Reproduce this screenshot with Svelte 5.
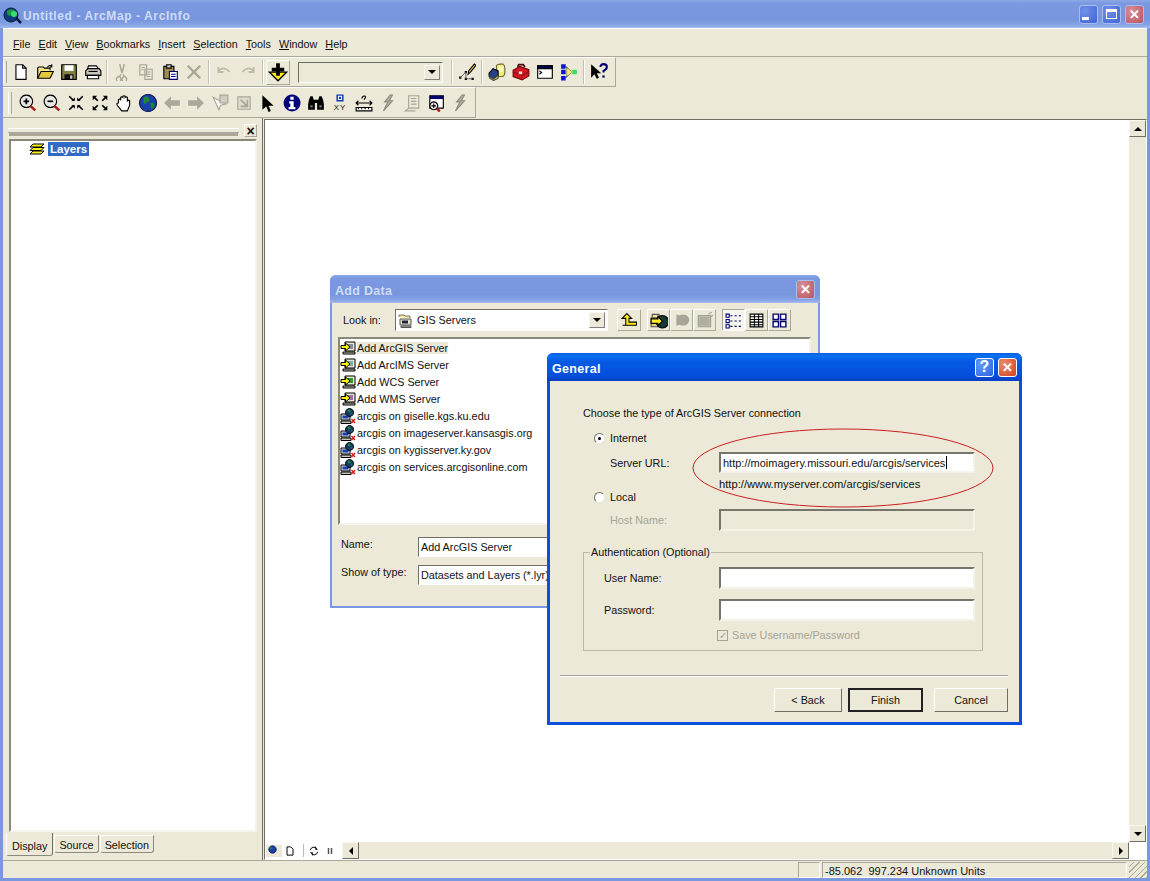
<script>
  // each icon is a list of [d, fill, stroke, strokeWidth] drawn on a 16x16 grid
  const G = '#a7a596'
  const bolt = [['M10 1 5 7h3L4 15l8-9H9l3-5z', '#b5b3a4', '#8c8a7c']]
  const addServer = (screen) => [
    ['M5 2h10v9H5z', '#e8e8d8', '#000'],
    ['M7 4h6v5H7z', screen, 'none'],
    ['M3 12h12v2H3z', '#c8c6b0', '#000'],
    ['M1 5.500h4.500V3l4.500 4-4.500 4V8.500H1z', '#ffef1a', '#000']
  ]
  const icons = {
    new: [['M3.500 1.500h6l3 3v10h-9z', '#fff', '#000'], ['M9.500 1.500v3h3', 'none', '#000']],
    open: [['M1.500 13.500v-9l1-1h4l1 1h5v2', '#f3e28a', '#000'], ['M1.500 13.500l3-6h11l-3 6z', '#e4c83c', '#000'], ['M10 4q2-3 4-1M14 1v2.500h-2', 'none', '#000']],
    save: [['M1.500 1.500h13v13h-13z', '#808040', '#000'], ['M4 2h8v5H4z', '#fff', 'none'], ['M4 10h8v4.500H4z', '#111', 'none'], ['M9 11h2v3H9z', '#ccc', 'none']],
    print: [['M4 2.500h7l2 3H3z', '#fff', '#000'], ['M1.500 7l2-2h10l1.500 2v4H1.500z', '#c8c6ba', '#000'], ['M3 11h10v3H3z', '#fff', '#000'], ['M4 7.500h8', 'none', '#000']],
    cut: [['M6 1l2 8M10 1 8 9', 'none', G, 1.300], ['M5 12a2 2.500 0 1 0 .1 0zM10 12a2 2.500 0 1 0 .1 0zM7 10l-1 2M9 10l1 2', 'none', G, 1.200]],
    copy: [['M2.500 1.500h6v9h-6zM7 5.500h6.500v9H7z', '#ece9d8', G], ['M4 4h3M4 6h2M8.500 8h3.500M8.500 10h3.500M8.500 12h3.500', 'none', G]],
    paste: [['M2.500 3h9v11h-9z', '#a08c50', '#000'], ['M5 1.500h4v3H5z', '#ccc', '#000'], ['M7.500 7.500h7v7h-7z', '#fff', '#00007a'], ['M9 10h4M9 12h4', 'none', '#00007a']],
    del: [['M2.500 2.500l11 11M13.500 2.500l-11 11', 'none', G, 2]],
    undo: [['M3 7q5-5 10 1M3 3.500V8h4.500', 'none', '#bdbbac', 1.600]],
    redo: [['M13 7q-5-5-10 1M13 3.500V8H8.500', 'none', '#bdbbac', 1.600]],
    add: [['M1 8h14L8 15z', '#ffef1a', '#000'], ['M6.500 1h3v3.500H13v3H9.500V11h-3V7.500H3v-3h3.500z', '#000', 'none']],
    edit: [['M1 12h2v2H1zM6 7h2v2H6zM6 13h2v2H6zM12 13h2v2h-2z', '#000', 'none'], ['M2 13l5-5M7 8v6M7 14h6', 'none', '#555', 0.800], ['M9 10l.500-3 5-6 1.500 1.200-5 6z', '#ffe04a', '#000']],
    catalog: [['M7.500 2.500q1-1.500 3-1.500h3q1.500 1 1.500 4v3q0 3-2 4H8z', '#f2ee7c', '#6a6a30'], ['M9 3h4q1 2 0 5H9z', '#fafac0', 'none'], ['M1 9l3.500-4L9 7v4l-4 3-4-2z', '#26408c', '#000'], ['M1.500 12l3.500 2 4-3v2.500l-4 2-3.500-2z', '#e8e05c', '#444']],
    toolbox: [['M1 6.500l6-3.500 8 3v5.500l-6 3.500-8-3z', '#d8141e', '#70080c'], ['M5 3.500l1-2h4l1.500 2', 'none', '#4a0a0a', 1.500], ['M1 8l8 3 6-3.500', 'none', '#8a0c12'], ['M6 7.500h3v2.500H6z', '#f4d8d8', 'none']],
    cmd: [['M1.500 2.500h13v11h-13z', '#fff', '#000'], ['M1.500 2.500h13v2.500h-13z', '#00006e', '#000'], ['M3 7l2 1.500L3 10', 'none', '#000']],
    model: [['M1 1h4v4H1zM1 6h4v4H1zM1 11.500h4v4H1z', '#1010d8', 'none'], ['M5 3l2 2v6l-2 2', 'none', '#1010d8'], ['M6 4l5 4-5 4z', '#f6ee80', '#8a8a30', 0.700], ['M11 6h4v4h-4z', '#3cdc60', 'none']],
    help: [['M1 1v12l3-3 2 4 2-1-2-4h4z', '#000', 'none'], ['M9 3.500q1-2.500 3-2.500 3 0 3 2.500 0 2-3 3.500v1.500', 'none', '#00006e', 1.800], ['M11 11h2v2h-2z', '#00006e', 'none']],
    zoomin: [['M6.500 1a5.500 5.500 0 1 0 .1 0z', '#e8e8e4', '#000'], ['M4 6.500h5M6.500 4v5', 'none', '#000', 1.500], ['M10 10.500l4.500 4', 'none', '#b01818', 2.200]],
    zoomout: [['M6.500 1a5.500 5.500 0 1 0 .1 0z', '#e8e8e4', '#000'], ['M4 6.500h5', 'none', '#000', 1.500], ['M10 10.500l4.500 4', 'none', '#b01818', 2.200]],
    fixin: [['M2 2l4 4M14 2l-4 4M2 14l4-4M14 14l-4-4', 'none', '#000', 1.500], ['M4 6h3V3zM12 6H9V3zM4 10h3v3zM12 10H9v3z', '#000', 'none']],
    fixout: [['M6 6L3 3M10 6l3-3M6 10l-3 3M10 10l3 3', 'none', '#000', 1.500], ['M1.500 1.500h4l-4 4zM14.500 1.500h-4l4 4zM1.500 14.500h4l-4-4zM14.500 14.500h-4l4-4z', '#000', 'none']],
    pan: [['M3 8V5q1-1 2 0V3q1-1 2 0v-1q1-1 2 0v1q1-1 2 0v3q1-1 2 0v4l-2 5H6L2 10q-1-2 1-2z', '#fff', '#000']],
    globe: [['M8 .5a7.500 7.500 0 1 0 .1 0z', '#1a3fa8', '#0a1a50'], ['M4 3q4-2 5 1 1 3-2 3-1 3-3 1zM10 8q4-1 4 2-2 4-3 3z', '#1d8a32', 'none']],
    back: [['M1 8l6-6v3.500h8v5H7V14z', '#aaa89a', 'none']],
    fwd: [['M15 8 9 2v3.500H1v5h8V14z', '#aaa89a', 'none']],
    sel: [['M2 3l5 11 1.500-4L13 9z', '#fff', G], ['M8 1h7v7H8z', '#d0cec0', G]],
    clear: [['M2.500 2.500h11v11h-11z', '#e0ddcc', G], ['M5 5l6 6M11 5v6H5', 'none', G, 1.400]],
    pointer: [['M3 1v13l3.500-3 2 5 2-1-2-4.500H13z', '#000', 'none']],
    info: [['M8 .5a7.500 7.500 0 1 0 .1 0z', '#00007a', 'none'], ['M6.500 2.500h3v2.500h-3zM5.500 6.500h4v5h1.500v2H5v-2h1.500v-3h-1z', '#fff', 'none']],
    find: [['M1 9q0-3 2-7h2l1 3h4l1-3h2q2 4 2 7v5H9V8H7v6H1z', '#000', 'none'], ['M3 10h2v2H3zM11 10h2v2h-2z', '#777', 'none']],
    xy: [['M5.500 1h5v5h-5z', '#fff', '#0c3ab0', 1.300], ['M7.500 3h1v1h-1z', '#0c3ab0', '#0c3ab0']],
    measure: [['M1 12h14v3H1z', '#fff', '#000'], ['M3 12v1.500M6 12v1.500M9 12v1.500M12 12v1.500', 'none', '#000'], ['M1 8h14M3 6l-2 2 2 2M13 6l2 2-2 2', 'none', '#000'], ['M6 4q1-3 3-2 1 1-1 3', 'none', '#000']],
    bolt,
    text: [['M5 1.500h9v11H5z', '#ece9d8', G], ['M7 4h5M7 6.500h5M7 9h5M5 12.500l-3 2.500h9', 'none', G]],
    viewer: [['M2.500 1.500h12v11h-12z', '#fff', '#000'], ['M2.500 1.500h12v3h-12z', '#00006e', 'none'], ['M6 7a3.500 3.500 0 1 0 .1 0z', '#eee', '#000'], ['M4 10.500h4M6 8.500v4', 'none', '#000'], ['M8.500 13l3 2.500', 'none', '#b01818', 2]],
    addgis: addServer('#8888a0'),
    addims: addServer('#7ab0a0'),
    addwcs: addServer('#2c9a30'),
    addwms: addServer('#9a70a0'),
    gissrv: [['M1 6h9v6H1z', '#d8d8e8', '#000'], ['M2.500 7.500h6v3h-6z', '#1a3fa8', 'none'], ['M1 13h10v2.500H1z', '#c8c6b8', '#000'], ['M9.500 .5a4 4 0 1 0 .1 0z', '#143a70', '#000'], ['M7.500 2q2-1 3 .5t-2 2zM12 4l.500 2-2 1z', '#1d8a32', 'none'], ['M11.500 11l3.500 4M15 11l-3.500 4', 'none', '#d01818', 1.300]],
    gisfolder: [['M1 5V3h5l1 1h5v2', '#f3e28a', '#777'], ['M2 7h11v6H2z', '#e8e4c8', '#555'], ['M4 8.500h6v3H4z', '#224', 'none'], ['M3 14h10v1.500H3z', '#aaa', '#555']],
    up: [['M1.500 12.500h13v-3h-7V6H10L5.500 1.500 1 6h3.500v6.500', '#ffef1a', '#000']],
    connect: [['M2 6V3h6v4', '#f3e28a', '#555'], ['M1 6h8v8H1z', '#e8d070', '#555'], ['M11 4a5.500 5.500 0 1 0 .1 0z', '#143a30', '#000'], ['M1 7h6V5l4 4-4 4v-2H1z', '#ffef1a', '#000']],
    db: [['M3 3a5 5 0 1 1 0 10zM9 3a5.500 5 0 1 1-.1 0z', '#a8a698', 'none'], ['M4 5h9v6H4z', '#a8a698', 'none']],
    tv: [['M2 4h11v10H2z', '#c8c6b6', '#a09e90'], ['M3 5h9v8H3z', '#b0ae9e', 'none'], ['M11 3l3-2M13 5l2-1', 'none', '#a09e90']],
    details: [['M1 2h3v3H1zM1 7h3v3H1zM1 12h3v3H1z', '#fff', '#00007a'], ['M5 3.500h2M5 8.500h2M5 13.500h2M9 3.500h2M9 8.500h2M9 13.500h2M13 3.500h2M13 8.500h2M13 13.500h2', 'none', '#00007a']],
    grid: [['M2 2h12v12H2z', '#fff', '#000'], ['M2 4.500h12M2 7h12M2 9.500h12M2 12h12M6 2v12M10 2v12', 'none', '#000']],
    large: [['M2 2h5v5H2zM9 2h5v5H9zM2 9h5v5H2zM9 9h5v5H9z', '#fff', '#00006e', 1.300]],
    mapview: [['M6 1a5 5 0 1 0 .1 0z', '#1a3fa8', '#0a1a50'], ['M3 3q3-1 3 2-2 2-3 0z', '#1d8a32', 'none']],
    page: [['M4 2.500h5l3 3v8H4z', '#fff', '#000', 1.300]],
    refresh: [['M3 7a5 5 0 0 1 9-2M13 9a5 5 0 0 1-9 2', 'none', '#000', 1.300], ['M10 2v4h3M6 14v-4H3', 'none', '#000']],
    pause: [['M5 4h2v8H5zM9 4h2v8H9z', '#555', 'none']]
  }

  const menus = ['File', 'Edit', 'View', 'Bookmarks', 'Insert', 'Selection', 'Tools', 'Window', 'Help']
  const row1a = ['new', 'open', 'save', 'print', ':', 'cut', 'copy', 'paste', 'del', '|', 'undo', 'redo', '|']
  const row1b = ['|', 'edit', '|', 'catalog', 'toolbox', 'cmd', 'model', '|', 'help']
  const row2 = ['zoomin', 'zoomout', 'fixin', 'fixout', 'pan', 'globe', 'back', 'fwd', 'sel', 'clear', 'pointer', 'info', 'find', 'xy', 'measure', 'bolt', 'text', 'viewer', 'bolt']
  const sources = [
    ['addgis', 'Add ArcGIS Server'],
    ['addims', 'Add ArcIMS Server'],
    ['addwcs', 'Add WCS Server'],
    ['addwms', 'Add WMS Server'],
    ['gissrv', 'arcgis on giselle.kgs.ku.edu'],
    ['gissrv', 'arcgis on imageserver.kansasgis.org'],
    ['gissrv', 'arcgis on kygisserver.ky.gov'],
    ['gissrv', 'arcgis on services.arcgisonline.com']
  ]
</script>

{#snippet icon(name, size = 18)}
  <svg class="icon" width={size} height={size} viewBox="0 0 16 16">
    {#each icons[name] as [d, fill, stroke, sw]}
      <path {d} {fill} {stroke} stroke-width={sw ?? 1} />
    {/each}
    {#if name === 'xy'}
      <text x="8" y="14.500" text-anchor="middle" font-size="7" letter-spacing="1" fill="#111">XY</text>
    {/if}
  </svg>
{/snippet}

{#snippet tools(list)}
  {#each list as name}
    {#if name === '|' || name === ':'}
      <span class="sep" class:tight={name === ':'}></span>
    {:else}
      <span class="tool">{@render icon(name)}</span>
    {/if}
  {/each}
{/snippet}

{#snippet arrow(dir)}
  <span class="arrow {dir}"></span>
{/snippet}

<div class="app">
  <header class="title inactive">
    <svg class="logo" width="20" height="20" viewBox="0 0 20 20">
      <circle cx="8" cy="9" r="7" fill="#123a78" stroke="#0a1a40" />
      <path d="M4 5q4-3 7-1 2 3-2 5-3 2-5-1z" fill="#1d9a40" />
      <circle cx="11" cy="8" r="3" fill="#34e070" />
      <path d="M13 12l5 5" stroke="#0a1a40" stroke-width="2.500" />
    </svg>
    <span class="title-text">Untitled - ArcMap - ArcInfo</span>
    <div class="caption-btns">
      <span class="cap"><span class="min"></span></span>
      <span class="cap"><span class="max"></span></span>
      <span class="cap close">✕</span>
    </div>
  </header>

  <div class="chrome">
    <nav class="menubar">
      {#each menus as m}<span class="menu">{m}</span>{/each}
    </nav>

    <div class="toolbar row1">
      <span class="grip"></span>
      {@render tools(row1a)}
      <span class="tool raised">{@render icon('add', 20)}</span>
      <div class="scale">
        <span class="scale-field"></span>
        <span class="scale-btn">{@render arrow('down')}</span>
      </div>
      {@render tools(row1b)}
    </div>

    <div class="toolbar row2">
      <span class="grip"></span>
      {@render tools(row2)}
    </div>

    <main class="workspace">
      <aside class="toc">
        <div class="toc-head">
          <span class="toc-grip"></span>
          <span class="toc-close">×</span>
        </div>
        <div class="tree">
          <div class="tree-row">
            <svg class="icon" width="16" height="14" viewBox="0 0 16 14">
              <path d="M4 2h11l-3 3H1zM4 5.500h11l-3 3H1zM4 9h11l-3 3H1z" fill="#f8f020" stroke="#000" />
            </svg>
            <span class="layer-name">Layers</span>
          </div>
        </div>
        <div class="tabs">
          <span class="tab active">Display</span>
          <span class="tab">Source</span>
          <span class="tab">Selection</span>
        </div>
      </aside>

      <section class="map">
        <div class="map-top">
          <div class="canvas"></div>
          <div class="vscroll">
            <span class="sbtn">{@render arrow('up')}</span>
            <span class="strack"></span>
            <span class="sbtn">{@render arrow('down')}</span>
          </div>
        </div>
        <div class="map-bottom">
          <div class="view-btns">
            <span class="vb on">{@render icon('mapview', 12)}</span>
            <span class="vb">{@render icon('page', 12)}</span>
            <span class="vsep"></span>
            <span class="vb">{@render icon('refresh', 12)}</span>
            <span class="vb">{@render icon('pause', 12)}</span>
          </div>
          <div class="hscroll">
            <span class="sbtn">{@render arrow('left')}</span>
            <span class="strack"></span>
            <span class="sbtn">{@render arrow('right')}</span>
          </div>
          <span class="corner"></span>
        </div>
      </section>
    </main>

    <footer class="status">
      <span class="cell small"></span>
      <span class="cell coords">-85.062  997.234 Unknown Units</span>
      <span class="sizer"></span>
    </footer>
  </div>

  <div class="dialog add-data">
    <header class="title d-title inactive">
      <span class="d-name">Add Data</span>
      <span class="cap close">✕</span>
    </header>
    <div class="d-body">
      <div class="look">
        <span class="look-label">Look in:</span>
        <div class="combo">
          {@render icon('gisfolder', 16)}
          <span class="combo-text">GIS Servers</span>
          <span class="scale-btn">{@render arrow('down')}</span>
        </div>
        <span class="ibtn first">{@render icon('up', 17)}</span>
        <span class="ibtn lead">{@render icon('connect', 18)}</span>
        <span class="ibtn">{@render icon('db', 18)}</span>
        <span class="ibtn">{@render icon('tv', 18)}</span>
        <span class="ibtn lead pressed">{@render icon('details', 17)}</span>
        <span class="ibtn">{@render icon('grid', 17)}</span>
        <span class="ibtn">{@render icon('large', 17)}</span>
      </div>
      <div class="list">
        {#each sources as [ic, label], i}
          <div class="item">
            {@render icon(ic, 16)}
            <span class:current={i === 0}>{label}</span>
          </div>
        {/each}
      </div>
      <div class="d-field name">
        <span>Name:</span>
        <span class="box">Add ArcGIS Server</span>
      </div>
      <div class="d-field type">
        <span>Show of type:</span>
        <span class="box">Datasets and Layers (*.lyr)</span>
      </div>
    </div>
  </div>

  <div class="dialog general">
    <header class="title d-title active-title">
      <span class="d-name">General</span>
      <span class="cap help-cap">?</span>
      <span class="cap close hot">✕</span>
    </header>
    <div class="g-body">
      <p class="intro">Choose the type of ArcGIS Server connection</p>
      <label class="radio-row first-radio"><span class="radio checked"></span>Internet</label>
      <div class="form-row url-row">
        <span class="f-label">Server URL:</span>
        <span class="input">http://moimagery.missouri.edu/arcgis/services<span class="caret"></span></span>
      </div>
      <div class="hint">http://www.myserver.com/arcgis/services</div>
      <label class="radio-row"><span class="radio"></span>Local</label>
      <div class="form-row host-row">
        <span class="f-label disabled">Host Name:</span>
        <span class="input off"></span>
      </div>
      <fieldset class="auth">
        <legend>Authentication (Optional)</legend>
        <div class="form-row user-row">
          <span class="f-label">User Name:</span>
          <span class="input"></span>
        </div>
        <div class="form-row pass-row">
          <span class="f-label">Password:</span>
          <span class="input"></span>
        </div>
        <label class="check disabled"><span class="checkbox">✓</span>Save Username/Password</label>
      </fieldset>
      <div class="rule"></div>
      <div class="buttons">
        <button class="btn back" type="button">&lt; Back</button>
        <button class="btn default" type="button">Finish</button>
        <button class="btn cancel" type="button">Cancel</button>
      </div>
    </div>
  </div>

  <svg class="ring" width="320" height="90" viewBox="0 0 320 90">
    <ellipse cx="160" cy="45" rx="150" ry="39" fill="none" stroke="#cc2020" stroke-width="1" />
  </svg>
</div>

<style>
  :global(body) {
    margin: 0;
    background: #ece9d8;
  }

  .app {
    position: relative;
    width: 1150px;
    height: 881px;
    overflow: hidden;
    display: flex;
    flex-direction: column;
    font-family: "Liberation Sans", Arial, sans-serif;
    font-size: 10.800px;
    color: #111;
    background: #7b97e0;
  }

  .icon {
    display: block;
    flex: none;
  }

  /* title bars */
  .title {
    display: flex;
    align-items: center;
    flex: none;
    font-weight: bold;
  }
  .title.inactive {
    background: linear-gradient(#8aa8e6 0, #7b98e0 12%, #7896de 70%, #87a4e6 90%, #a6bdf0 100%);
    color: #cfdcf8;
  }
  .app > .title {
    height: 28px;
    box-sizing: border-box;
    padding: 3px 6px 0 3px;
  }
  .title-text {
    font-size: 12px;
    letter-spacing: 0.600px;
  }
  .caption-btns {
    margin: -3px 0 0 auto;
    display: flex;
    gap: 4px;
  }
  .cap {
    width: 19px;
    height: 19px;
    box-sizing: border-box;
    border: 1px solid #a8bdf0;
    border-radius: 3px;
    background: radial-gradient(circle at 30% 30%, #6f92e8, #3f63d6);
    color: #fff;
    display: flex;
    align-items: center;
    justify-content: center;
    font-size: 13px;
    font-weight: bold;
    flex: none;
  }
  .cap.close {
    background: radial-gradient(circle at 30% 30%, #d88f98, #b8545e);
  }
  .cap.hot {
    background: radial-gradient(circle at 30% 30%, #ee8d6c, #d0401c);
    border-color: #fff;
  }
  .cap.help-cap {
    background: radial-gradient(circle at 30% 30%, #5f9cf8, #2a62e0);
    border-color: #fff;
    font-size: 16px;
  }
  .min {
    width: 7px;
    height: 3px;
    background: #fff;
    margin: 8px 6px 0 0;
  }
  .max {
    width: 11px;
    height: 10px;
    box-sizing: border-box;
    border: 1px solid #fff;
    border-top-width: 3px;
  }

  /* main frame */
  .chrome {
    flex: 1;
    min-height: 0;
    display: flex;
    flex-direction: column;
    margin: 0 3px 3px;
    background: #ece9d8;
  }
  .menubar {
    height: 29px;
    flex: none;
    box-sizing: border-box;
    display: flex;
    align-items: center;
    gap: 8px;
    padding: 2px 0 0 10px;
    border-top: 1px solid #fff;
    border-bottom: 1px solid #aca899;
  }
  .menu {
    display: inline-block;
  }
  .menu::first-letter {
    text-decoration: underline;
  }

  .toolbar {
    display: flex;
    align-items: center;
    flex: none;
    box-sizing: border-box;
    border-top: 1px solid #fff;
    border-right: 1px solid #aca899;
    border-bottom: 1px solid #aca899;
  }
  .row1 {
    height: 30px;
    width: 613px;
  }
  .row2 {
    height: 31px;
    width: 473px;
    padding-left: 5px;
  }
  .grip {
    width: 2px;
    height: 22px;
    border-left: 1px solid #fff;
    border-right: 1px solid #aca899;
    flex: none;
  }
  .row1 .grip {
    margin-right: 2px;
  }
  .row2 .grip {
    margin-right: 4px;
  }
  .sep {
    width: 1px;
    height: 24px;
    background: #c4c1b0;
    border-right: 1px solid #fff;
    flex: none;
    margin: 0 2px;
  }
  .sep.tight {
    margin: 0 2px 0 1px;
  }
  .tool {
    width: 24px;
    height: 24px;
    display: flex;
    align-items: center;
    justify-content: center;
    flex: none;
  }
  .tool.raised {
    height: 25px;
    box-sizing: border-box;
    border: 1px solid;
    border-color: #fff #aca899 #aca899 #fff;
  }
  .scale {
    display: flex;
    box-sizing: border-box;
    width: 145px;
    height: 21px;
    margin: 0 6px 0 8px;
    flex: none;
    padding: 2px;
    border: 1px solid;
    border-color: #716f64 #fff #fff #716f64;
    justify-content: flex-end;
  }
  .scale-field {
    flex: 1;
  }
  .scale-btn {
    width: 16px;
    box-sizing: border-box;
    border: 1px solid;
    border-color: #f8f8f0 #808080 #808080 #f8f8f0;
    background: #ece9d8;
    display: flex;
    align-items: center;
    justify-content: center;
    flex: none;
  }
  .arrow {
    width: 0;
    height: 0;
    border: 4px solid transparent;
  }
  .arrow.down {
    border-top-color: #000;
    border-bottom-width: 0;
  }
  .arrow.up {
    border-bottom-color: #000;
    border-top-width: 0;
  }
  .arrow.left {
    border-right-color: #000;
    border-left-width: 0;
  }
  .arrow.right {
    border-left-color: #000;
    border-right-width: 0;
  }

  /* workspace */
  .workspace {
    flex: 1;
    min-height: 0;
    display: flex;
    border-bottom: 1px solid #aca899;
  }
  .toc {
    width: 260px;
    flex: none;
    display: flex;
    flex-direction: column;
    box-sizing: border-box;
    padding: 4px 5px 3px 3px;
    border-right: 1px solid #716f64;
  }
  .toc-head {
    height: 17px;
    display: flex;
    align-items: center;
    gap: 2px;
    flex: none;
    padding-left: 2px;
  }
  .toc-grip {
    flex: 1;
    height: 3px;
    border-top: 1px solid #fff;
    border-bottom: 1px solid #aca899;
    box-shadow: 0 4px 0 -1px #aca899;
  }
  .toc-close {
    width: 13px;
    height: 13px;
    font-size: 14px;
    font-weight: bold;
    line-height: 12px;
    text-align: center;
    border: 1px solid;
    border-color: #fff #aca899 #aca899 #fff;
    box-sizing: border-box;
    margin-left: 3px;
  }
  .tree {
    flex: 1;
    min-height: 0;
    background: #fff;
    border: 2px solid;
    border-color: #8a8878 #f5f4ec #f5f4ec #8a8878;
    box-sizing: border-box;
    padding: 0 0 0 18px;
    margin-left: 3px;
  }
  .tree-row {
    display: flex;
    align-items: center;
    gap: 3px;
    height: 15px;
  }
  .layer-name {
    background: #316ac5;
    color: #fff;
    font-weight: bold;
    padding: 0 2px;
    line-height: 14px;
    font-size: 11.500px;
  }
  .tabs {
    display: flex;
    align-items: flex-start;
    height: 25px;
    box-sizing: border-box;
    flex: none;
    padding: 3px 0 0;
    gap: 1px;
  }
  .tab {
    box-sizing: border-box;
    padding: 3px 4px 0;
    height: 18px;
    border: 1px solid #8c8a7c;
    border-top-color: #fff;
    border-left-color: #fff;
    border-radius: 0 0 3px 3px;
  }
  .tab.active {
    height: 23px;
    margin-top: -2px;
    padding: 7px 5px 0;
    border-top: 0;
    border-right: 1px solid #716f64;
  }

  .map {
    flex: 1;
    min-width: 0;
    display: flex;
    flex-direction: column;
    border: 1px solid;
    border-color: #716f64 #fff #fff #716f64;
    margin: 1px 0 0 1px;
  }
  .map-top {
    flex: 1;
    min-height: 0;
    display: flex;
  }
  .canvas {
    flex: 1;
    background: #fff;
  }
  .vscroll {
    width: 17px;
    display: flex;
    flex-direction: column;
    flex: none;
  }
  .hscroll {
    flex: 1;
    display: flex;
    height: 17px;
  }
  .sbtn {
    width: 17px;
    height: 17px;
    box-sizing: border-box;
    background: #ece9d8;
    border: 1px solid;
    border-color: #f8f8f0 #716f64 #716f64 #f8f8f0;
    display: flex;
    align-items: center;
    justify-content: center;
    flex: none;
  }
  .strack {
    flex: 1;
    background: #ece9d8;
  }
  .map-bottom {
    display: flex;
    height: 17px;
    flex: none;
    background: #fff;
  }
  .view-btns {
    width: 77px;
    display: flex;
    align-items: center;
    flex: none;
    box-sizing: border-box;
    padding-left: 1px;
    background: #fff;
  }
  .vb {
    width: 16px;
    display: flex;
    justify-content: center;
  }
  .vb.on {
    background: #ece9d8;
  }
  .vsep {
    width: 1px;
    height: 13px;
    background: #bbb;
    margin: 0 2px 0 5px;
  }
  .corner {
    width: 17px;
    background: #fff;
  }

  .status {
    height: 17px;
    flex: none;
    display: flex;
    justify-content: flex-end;
    box-sizing: border-box;
    padding: 1px 0 0;
    gap: 2px;
  }
  .cell {
    border: 1px solid;
    border-color: #aca899 #fff #fff #aca899;
    box-sizing: border-box;
    white-space: pre;
    line-height: 16px;
    padding-left: 2px;
    font-size: 11px;
  }
  .cell.small {
    width: 22px;
  }
  .cell.coords {
    width: 305px;
  }
  .sizer {
    width: 18px;
    background: repeating-linear-gradient(135deg, #ece9d8 0 3px, #aca899 3px 4px);
  }

  /* dialogs float over the map, like windows on a desktop */
  .dialog {
    position: absolute;
    display: flex;
    flex-direction: column;
    box-sizing: border-box;
    border-radius: 6px 6px 0 0;
  }
  .d-title {
    height: 28px;
    box-sizing: border-box;
    padding: 0 5px;
    border-radius: 6px 6px 0 0;
    font-size: 12.500px;
    justify-content: flex-end;
    gap: 4px;
  }
  .d-name {
    margin-right: auto;
    padding-top: 3px;
    letter-spacing: 0.300px;
  }
  .d-title.active-title {
    background: linear-gradient(#0a5ce0 0, #0a72f0 10%, #045ae4 30%, #0450dc 80%, #0a3ec0 100%);
    color: #fff;
  }

  .add-data {
    left: 330px;
    top: 275px;
    width: 490px;
    height: 333px;
    background: #7b97e0;
  }
  .d-body {
    flex: 1;
    margin: 0 2px 2px;
    background: #ece9d8;
    display: flex;
    flex-direction: column;
    padding: 6px 7px 0 6px;
  }
  .look {
    display: flex;
    align-items: center;
    height: 22px;
    margin-left: 1px;
  }
  .look-label {
    width: 56px;
    padding-left: 4px;
    box-sizing: border-box;
    flex: none;
  }
  .combo {
    width: 213px;
    height: 22px;
    box-sizing: border-box;
    display: flex;
    align-items: center;
    gap: 3px;
    background: #fff;
    padding: 2px;
    border: 1px solid;
    border-color: #716f64 #fff #fff #716f64;
    flex: none;
  }
  .combo-text {
    flex: 1;
  }
  .combo .scale-btn {
    height: 16px;
  }
  .ibtn {
    width: 23px;
    height: 22px;
    box-sizing: border-box;
    display: flex;
    align-items: center;
    justify-content: center;
    border: 1px solid;
    border-color: #fff #aca899 #aca899 #fff;
    flex: none;
  }
  .ibtn.first {
    margin-left: 9px;
    width: 24px;
  }
  .ibtn.lead {
    margin-left: 6px;
  }
  .ibtn.pressed {
    background: #f6f5ee;
    border-color: #aca899 #fff #fff #aca899;
  }
  .list {
    height: 188px;
    margin-top: 6px;
    box-sizing: border-box;
    background: #fff;
    border: 2px solid;
    border-color: #8a8878 #f5f4ec #f5f4ec #8a8878;
    flex: none;
  }
  .item {
    height: 17px;
    display: flex;
    align-items: center;
    gap: 1px;
    white-space: nowrap;
    padding-top: 1px;
    box-sizing: border-box;
  }
  .current {
    background: #ece9d8;
  }
  .d-field {
    display: flex;
    align-items: flex-start;
    padding-left: 3px;
  }
  .d-field > span:first-child {
    width: 77px;
    line-height: 14px;
  }
  .d-field.name {
    margin-top: 12px;
  }
  .d-field.type {
    margin-top: 8px;
  }
  .box {
    width: 200px;
    height: 20px;
    line-height: 18px;
    box-sizing: border-box;
    padding-left: 2px;
    background: #fff;
    border: 1px solid;
    border-color: #716f64 #fff #fff #716f64;
    white-space: nowrap;
    overflow: hidden;
  }

  .general {
    left: 547px;
    top: 353px;
    width: 475px;
    height: 372px;
    background: #0a50d8;
  }
  .g-body {
    flex: 1;
    margin: 0 3px 3px;
    background: #ece9d8;
    padding: 0 13px 0 33px;
    box-sizing: border-box;
  }
  .intro {
    margin: 25px 0 0;
    line-height: 14px;
  }
  .radio-row {
    display: flex;
    align-items: center;
    gap: 5px;
    height: 14px;
    padding-left: 11px;
  }
  .first-radio {
    margin-top: 11px;
  }
  .radio-row:not(.first-radio) {
    margin-top: -1px;
  }
  .radio {
    width: 11px;
    height: 11px;
    box-sizing: border-box;
    border-radius: 50%;
    background: #fff;
    border: 1px solid;
    border-color: #716f64 #e8e8e0 #e8e8e0 #716f64;
    position: relative;
    flex: none;
  }
  .radio.checked::after {
    content: "";
    position: absolute;
    left: 3px;
    top: 3px;
    width: 3px;
    height: 3px;
    border-radius: 50%;
    background: #000;
  }
  .form-row {
    display: flex;
    align-items: center;
  }
  .f-label {
    width: 136px;
    flex: none;
    padding-left: 27px;
    box-sizing: border-box;
  }
  .f-label.disabled {
    color: #a6a496;
  }
  .input {
    width: 256px;
    box-sizing: border-box;
    background: #fff;
    border: 2px solid;
    border-color: #77766a #f4f3ea #f4f3ea #77766a;
    white-space: nowrap;
    padding-left: 2px;
    display: flex;
    align-items: center;
    flex: none;
    font-size: 11px;
  }
  .input.off {
    background: #ece9d8;
    height: 22px;
  }
  .caret {
    width: 1px;
    height: 13px;
    background: #000;
    margin-left: 1px;
  }
  .url-row {
    margin-top: 7px;
  }
  .url-row .input {
    height: 21px;
  }
  .hint {
    margin: 4px 0 0 136px;
    line-height: 14px;
    font-size: 11.200px;
  }
  .host-row {
    margin-top: 5px;
  }
  .auth {
    margin: 15px 0 0;
    padding: 0;
    width: 400px;
    height: 105px;
    box-sizing: border-box;
    border: 1px solid #bcb9a8;
  }
  legend {
    margin-left: 6px;
    padding: 0 1px;
    line-height: 12px;
  }
  .auth .f-label {
    width: 135px;
    padding-left: 20px;
  }
  .auth .input {
    height: 22px;
  }
  .user-row {
    margin-top: 9px;
  }
  .pass-row {
    margin-top: 10px;
  }
  .check {
    display: flex;
    align-items: center;
    gap: 4px;
    margin: 7px 0 0 133px;
    height: 14px;
    color: #a6a496;
  }
  .checkbox {
    width: 11px;
    height: 11px;
    box-sizing: border-box;
    border: 1px solid #a6a496;
    font-size: 10px;
    line-height: 10px;
    text-align: center;
  }
  .rule {
    margin: 24px 0 0 -23px;
    width: 448px;
    border-top: 1px solid #aca899;
    border-bottom: 1px solid #fff;
  }
  .buttons {
    display: flex;
    margin: 11px 0 0 191px;
  }
  .btn {
    height: 24px;
    box-sizing: border-box;
    font: inherit;
    color: #111;
    padding: 0;
    background: #ece9d8;
    border: 1px solid;
    border-color: #fff #716f64 #716f64 #fff;
    flex: none;
  }
  .btn.back {
    width: 68px;
  }
  .btn.default {
    width: 75px;
    margin-left: 6px;
    border: 2px solid #222;
  }
  .btn.cancel {
    width: 74px;
    margin-left: 11px;
  }

  .ring {
    position: absolute;
    left: 683px;
    top: 423px;
    pointer-events: none;
  }
</style>
